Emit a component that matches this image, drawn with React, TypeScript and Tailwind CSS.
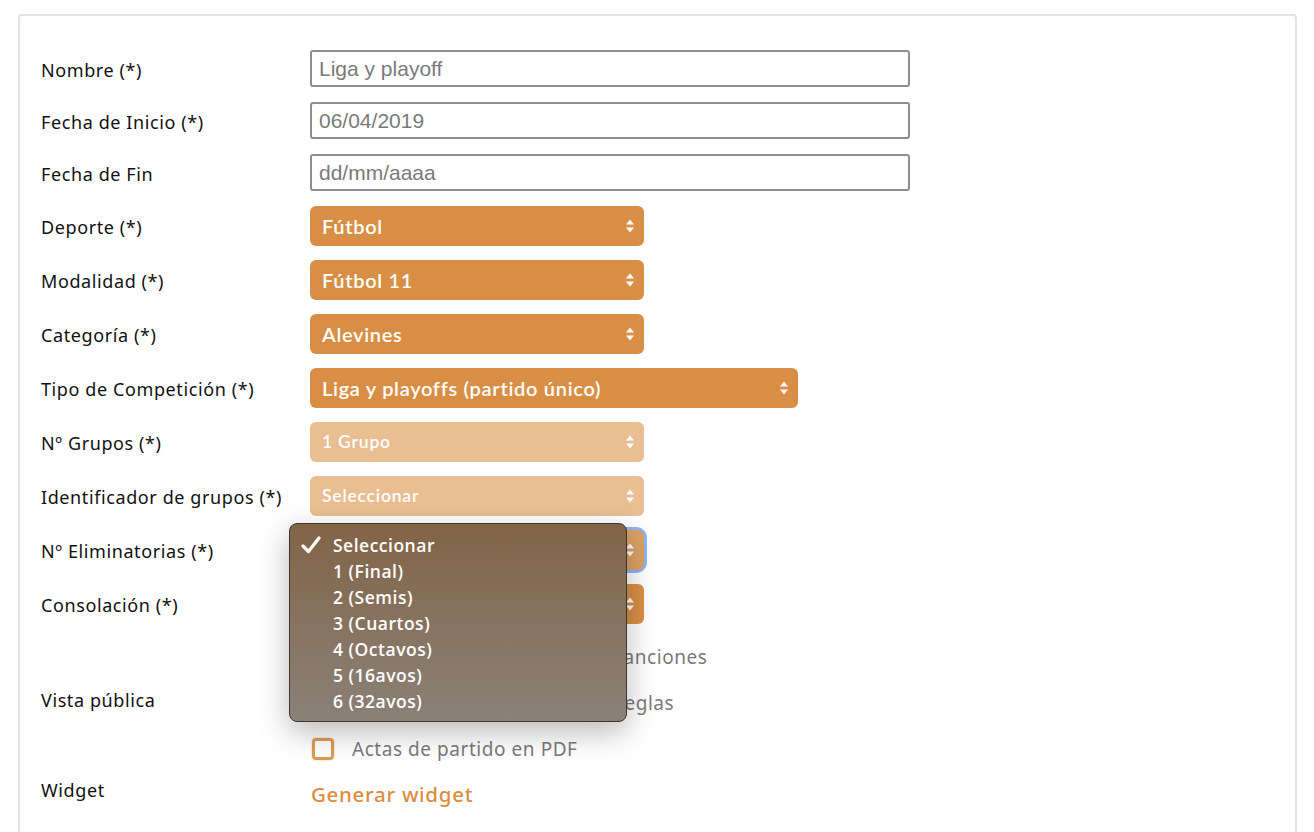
import React from "react";

const Arrows = () => (
  <svg width="10" height="16" viewBox="0 0 10 16" className="shrink-0">
    <path d="M5 1.5 L9 6.5 L1 6.5 Z" fill="white" />
    <path d="M5 14.5 L9 9.5 L1 9.5 Z" fill="white" />
  </svg>
);

const labelBase =
  "w-[269px] shrink-0 text-[18px] text-[#111] font-['Noto_Sans',sans-serif] tracking-[0.6px]";
const labelCls = labelBase + " pt-[3px]";

function InputRow({ label, value }: { label: string; value: string }) {
  return (
    <div className="flex items-center h-[37px] mb-[15px]">
      <div className={labelCls}>{label}</div>
      <div className="w-[600px] h-[37px] border-2 border-[#8e8e8e] rounded-[3px] px-[7px] flex items-center text-[21px] text-[#7a7a7a] font-['Liberation_Sans',sans-serif]">
        {value}
      </div>
    </div>
  );
}

function SelectRow({
  label,
  value,
  wide,
  light,
  focused,
}: {
  label: string;
  value: string;
  wide?: boolean;
  light?: boolean;
  focused?: boolean;
}) {
  return (
    <div className="flex items-center h-[40px] mb-[14px]">
      <div className={labelCls}>{label}</div>
      <div
        className={
          (focused ? "rounded-[8px] ring-[3px] ring-[#8db5f3] " : "") +
          "rounded-[6px]"
        }
      >
        <div
          className={
            (wide ? "w-[488px] " : "w-[334px] ") +
            (light
              ? "bg-[#e8be92] text-[17.5px] font-semibold tracking-[0.8px] "
              : focused
              ? "bg-[#dba266] text-[20px] font-semibold tracking-[0.7px] "
              : "bg-[#d88f45] text-[20px] font-semibold tracking-[0.7px] ") +
            "h-[40px] rounded-[6px] pl-[12px] pr-[9px] flex items-center justify-between text-white font-['Lato',sans-serif]"
          }
        >
          <span>{value}</span>
          <Arrows />
        </div>
      </div>
    </div>
  );
}

function CheckRow({ text }: { text: string }) {
  return (
    <div className="flex items-center h-[46px]">
      <div className="ml-[2px] w-[22px] h-[22px] border-[3px] border-[#de9a55] rounded-[4px] shadow-[0_0_2px_rgba(222,154,85,0.6)]" />
      <span className="ml-[18px] text-[19px] text-[#7a7a7a] font-['Noto_Sans',sans-serif] tracking-[0.55px]">
        {text}
      </span>
    </div>
  );
}

const options = [
  "Seleccionar",
  "1 (Final)",
  "2 (Semis)",
  "3 (Cuartos)",
  "4 (Octavos)",
  "5 (16avos)",
  "6 (32avos)",
];

export default function App() {
  return (
    <div className="bg-white min-h-[832px] pl-[18px] pt-[14px] pr-[17px]">
      <div className="relative border-2 border-[#e2e2e2] rounded-[4px] pl-[21px] pt-[34px] pb-[40px] w-[1279px]">
        <InputRow label="Nombre (*)" value="Liga y playoff" />
        <InputRow label="Fecha de Inicio (*)" value="06/04/2019" />
        <InputRow label="Fecha de Fin" value="dd/mm/aaaa" />
        <SelectRow label="Deporte (*)" value="Fútbol" />
        <SelectRow label="Modalidad (*)" value="Fútbol 11" />
        <SelectRow label="Categoría (*)" value="Alevines" />
        <SelectRow
          label="Tipo de Competición (*)"
          value="Liga y playoffs (partido único)"
          wide
        />
        <SelectRow label="Nº Grupos (*)" value="1 Grupo" light />
        <SelectRow
          label="Identificador de grupos (*)"
          value="Seleccionar"
          light
        />
        <SelectRow
          label="Nº Eliminatorias (*)"
          value="Seleccionar"
          focused
        />
        <SelectRow label="Consolación (*)" value="Seleccionar" />

        <div className="flex items-center -mt-[4px]">
          <div className={labelBase + " pb-[5px]"}>Vista pública</div>
          <div className="flex flex-col">
            <CheckRow text="Clasificación, goleadores, y Sanciones" />
            <CheckRow text="Calendarios, estadísticas, y Reglas" />
            <CheckRow text="Actas de partido en PDF" />
          </div>
        </div>

        <div className="flex items-start mt-[2px]">
          <div className={labelCls}>Widget</div>
          <a className="ml-[1px] mt-[5px] text-[20.5px] font-medium text-[#dc8d3f] font-['Noto_Sans',sans-serif] tracking-[0.7px]">
            Generar widget
          </a>
        </div>

        {/* native select popup */}
        <div className="absolute left-[269px] top-[507px] w-[338px] h-[199px] rounded-[8px] border border-[#3c3530] bg-gradient-to-b from-[#826446] to-[#8a8178] shadow-[0_10px_30px_rgba(0,0,0,0.28)] pt-[8px] pb-[9px]">
          {options.map((o, i) => (
            <div
              key={o}
              className="relative h-[26px] flex items-center pl-[43px] text-white text-[17.5px] font-semibold tracking-[0.5px] font-['Open_Sans',sans-serif]"
            >
              {i === 0 && (
                <svg
                  width="20"
                  height="18"
                  viewBox="0 0 20 18"
                  className="absolute left-[11px] top-[4px]"
                >
                  <path
                    d="M2 10 L7.5 15.5 L18 2"
                    stroke="white"
                    strokeWidth="3.2"
                    fill="none"
                    strokeLinecap="round"
                    strokeLinejoin="round"
                  />
                </svg>
              )}
              {o}
            </div>
          ))}
        </div>
      </div>
    </div>
  );
}
